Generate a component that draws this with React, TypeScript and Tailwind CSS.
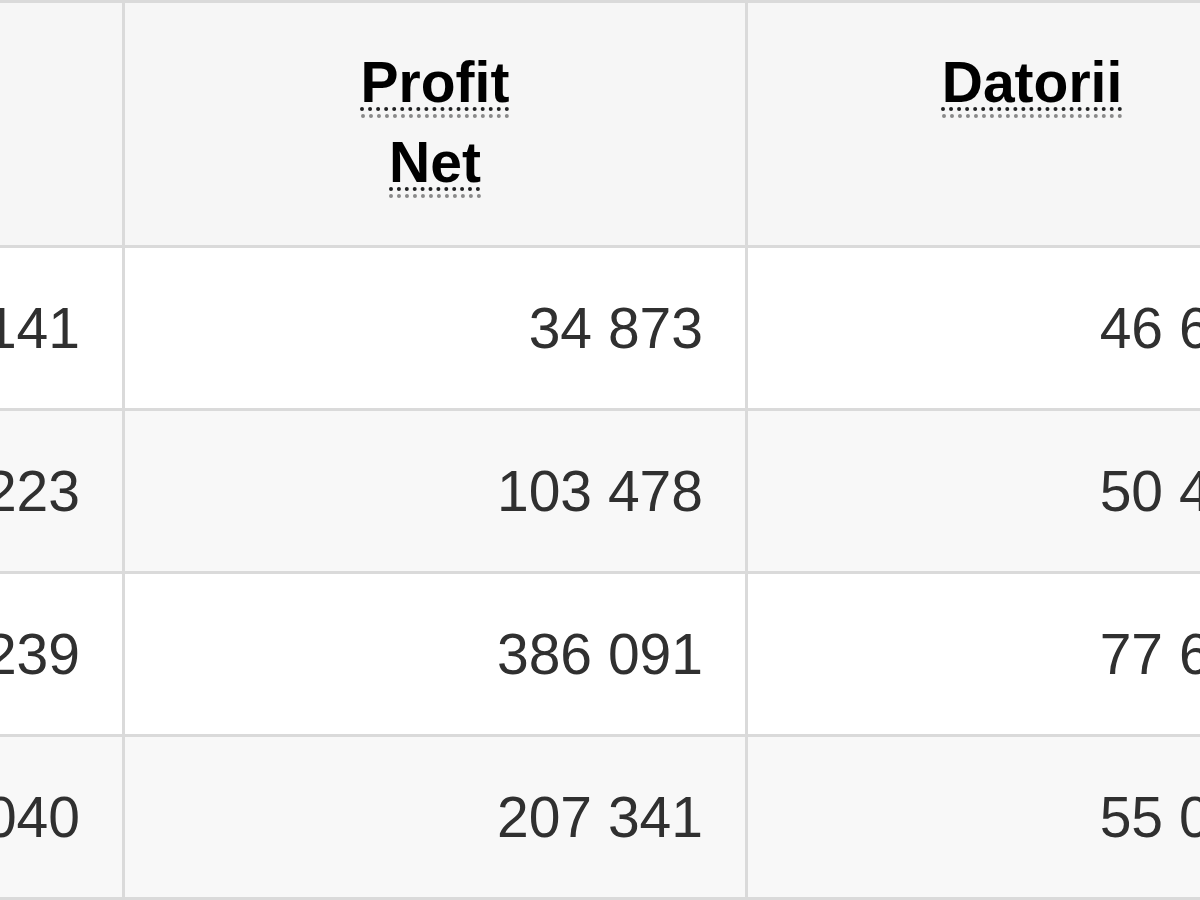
const rows = [
  { a: '1 278 141', b: '34 873', c: '46 612' },
  { a: '1 519 223', b: '103 478', c: '50 437' },
  { a: '2 104 239', b: '386 091', c: '77 685' },
  { a: '1 862 040', b: '207 341', c: '55 019' },
];

function Abbr({ children }: { children: string }) {
  return (
    <span className="underline decoration-dotted decoration-[4px] underline-offset-[5px] decoration-[#202122] border-b-4 border-dotted border-[#8a8a8a]">
      {children}
    </span>
  );
}

export default function App() {
  return (
    <div className="w-[1200px] h-[900px] overflow-hidden bg-white font-['Liberation_Sans',Arial,sans-serif] text-[57px] leading-[80px]">
      <div className="ml-[-178px] w-[1494px] grid grid-cols-[300px_620px_568px] gap-[3px] pt-[3px] pb-[3px] bg-[#dadada]">
        <div className="bg-[#f6f6f6]" />
        <div className="bg-[#f6f6f6] pt-[39px] pb-[43px] text-center font-bold text-black">
          <Abbr>Profit</Abbr>
          <br />
          <Abbr>Net</Abbr>
        </div>
        <div className="bg-[#f6f6f6] pt-[39px] text-center font-bold text-black">
          <Abbr>Datorii</Abbr>
        </div>

        {rows.map((r, i) => {
          const bg = i % 2 === 0 ? 'bg-white' : 'bg-[#f8f8f8]';
          return [
            <div key={`a${i}`} className={`${bg} py-[40px] pr-[42px] text-right text-[#303030] whitespace-nowrap`}>{r.a}</div>,
            <div key={`b${i}`} className={`${bg} py-[40px] pr-[42px] text-right text-[#303030] whitespace-nowrap`}>{r.b}</div>,
            <div key={`c${i}`} className={`${bg} py-[40px] pr-[42px] text-right text-[#303030] whitespace-nowrap`}>{r.c}</div>,
          ];
        })}
      </div>
    </div>
  );
}
